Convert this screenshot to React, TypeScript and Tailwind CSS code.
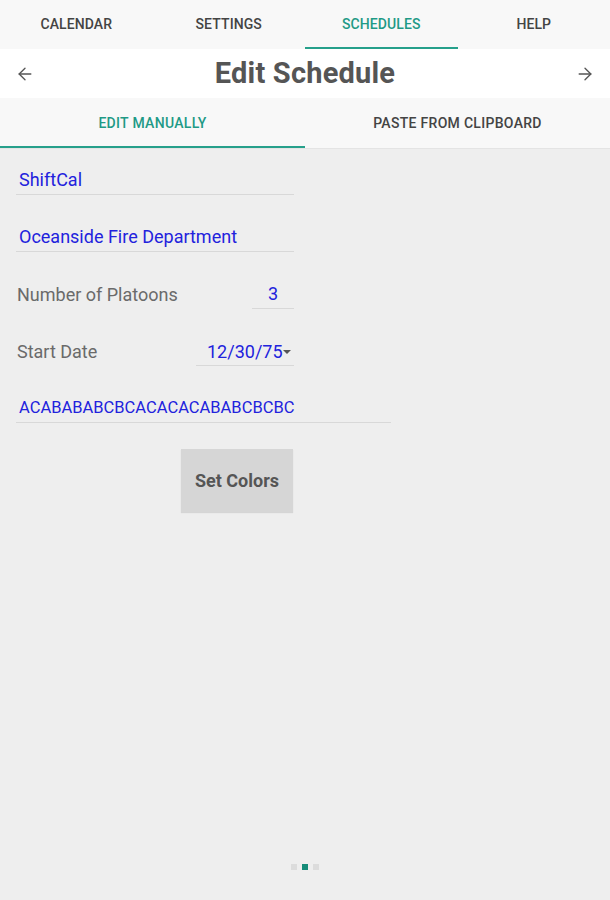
import { ArrowLeft, ArrowRight } from "lucide-react";

const topTabs = ["CALENDAR", "SETTINGS", "SCHEDULES", "HELP"];

export default function App() {
  return (
    <div className="w-[610px] h-[900px] bg-[#eeeeee] flex flex-col font-['Roboto',sans-serif]">
      <div className="h-[49px] bg-[#f8f8f8] grid grid-cols-4">
        {topTabs.map((t) => (
          <div
            key={t}
            className={`flex items-center justify-center text-[14px] font-medium tracking-[0.1px] pt-[2px] border-b-2 ${
              t === "SCHEDULES" ? "text-[#1f9a86] border-[#26a08b]" : "text-[#444] border-transparent"
            }`}
          >
            {t}
          </div>
        ))}
      </div>
      <div className="h-[49px] bg-white flex items-center justify-between px-[15px]">
        <ArrowLeft className="w-[20px] h-[20px] text-[#555]" strokeWidth={1.6} />
        <h1 className="text-[29px] font-bold text-[#555] tracking-[0.2px]">Edit Schedule</h1>
        <ArrowRight className="w-[20px] h-[20px] text-[#555]" strokeWidth={1.6} />
      </div>
      <div className="h-[51px] bg-[#f8f8f8] grid grid-cols-2 border-b border-[#e4e4e4]">
        <div className="flex items-center justify-center text-[14px] font-medium tracking-[0.3px] text-[#1f9a86] border-b-2 border-[#26a08b] pt-[2px]">
          EDIT MANUALLY
        </div>
        <div className="flex items-center justify-center text-[14px] font-medium tracking-[0.3px] text-[#444] border-b-2 border-transparent pt-[2px]">
          PASTE FROM CLIPBOARD
        </div>
      </div>

      <div className="flex flex-col pl-[16px] pt-[18px] text-[18px]">
        <div className="w-[278px] h-[28px] border-b border-[#d8d8d8] pl-[3px] text-[#2222dd] leading-[26px]">ShiftCal</div>
        <div className="w-[278px] h-[28px] mt-[29px] border-b border-[#d8d8d8] pl-[3px] text-[#2222dd] leading-[26px]">
          Oceanside Fire Department
        </div>
        <div className="w-[278px] h-[28px] mt-[29px] flex justify-between items-start">
          <span className="text-[#6a6a6a] leading-[28px] pl-[1px]">Number of Platoons</span>
          <span className="w-[42px] h-[28px] border-b border-[#d8d8d8] text-center text-[#2222dd] leading-[26px]">3</span>
        </div>
        <div className="w-[278px] h-[28px] mt-[29px] flex justify-between items-start">
          <span className="text-[#6a6a6a] leading-[28px] pl-[1px]">Start Date</span>
          <span className="w-[98px] h-[28px] border-b border-[#d8d8d8] text-[#2222dd] leading-[26px] pl-[11px] flex items-center">
            12/30/75
            <span className="w-0 h-0 border-l-[4px] border-r-[4px] border-t-[4px] border-l-transparent border-r-transparent border-t-[#555]" />
          </span>
        </div>
        <div className="w-[375px] h-[28px] mt-[29px] border-b border-[#d8d8d8] pl-[3px] text-[#2222dd] text-[16.5px] leading-[26px]">
          ACABABABCBCACACACABABCBCBC
        </div>
        <div className="w-[277px] flex justify-end mt-[26px]">
          <button className="w-[112px] h-[63px] bg-[#d6d6d6] text-[#555] text-[18px] font-bold shadow-[0_1px_1px_rgba(0,0,0,0.1)]">
            Set Colors
          </button>
        </div>
      </div>

      <div className="flex-1" />
      <div className="flex justify-center gap-[5px] pb-[30px]">
        <span className="w-[6px] h-[6px] bg-[#dcdcdc]" />
        <span className="w-[6px] h-[6px] bg-[#168c79]" />
        <span className="w-[6px] h-[6px] bg-[#dcdcdc]" />
      </div>
    </div>
  );
}
